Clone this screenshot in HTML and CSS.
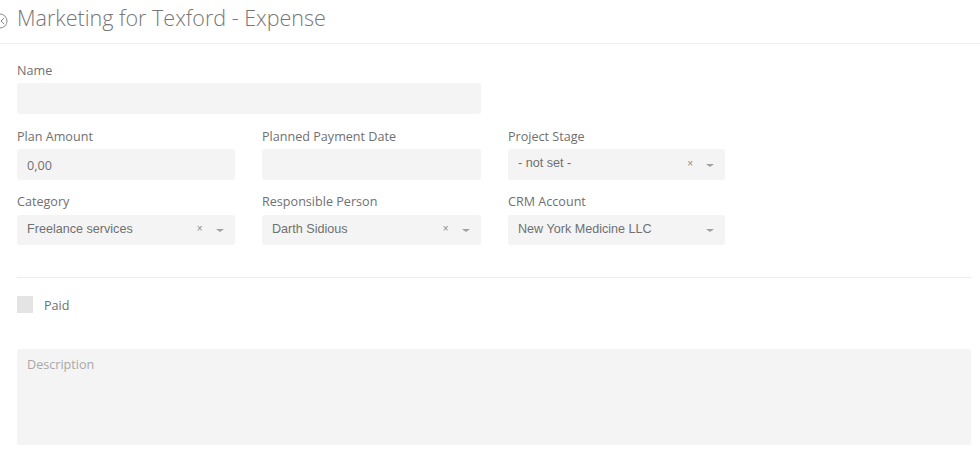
FILE: index.html
```html
<!DOCTYPE html>
<html lang="en">
<head>
<meta charset="utf-8">
<title>Marketing for Texford - Expense</title>
<link rel="stylesheet" href="styles.css">
</head>
<body>
<header class="head">
  <svg class="back" width="9" height="18" viewBox="0 0 9 18"><circle cx="0" cy="9" r="7" fill="none" stroke="#8a8a8a" stroke-width="1"/><path d="M4 6 L1 9 L4 12" fill="none" stroke="#8a8a8a" stroke-width="1"/></svg>
  <h1 class="title">Marketing for Texford - Expense</h1>
</header>
<form class="form">
  <div class="grid">
    <div class="field name"><label class="label">Name</label><div class="control"></div></div>
    <div class="field first"><label class="label">Plan Amount</label><div class="control text">0,00</div></div>
    <div class="field"><label class="label">Planned Payment Date</label><div class="control"></div></div>
    <div class="field"><label class="label">Project Stage</label><div class="control select tall"><span class="value">- not set -</span><span class="x">×</span><span class="caret"></span></div></div>
    <div class="field first"><label class="label low">Category</label><div class="control select"><span class="value">Freelance services</span><span class="x">×</span><span class="caret"></span></div></div>
    <div class="field"><label class="label low">Responsible Person</label><div class="control select"><span class="value">Darth Sidious</span><span class="x">×</span><span class="caret"></span></div></div>
    <div class="field"><label class="label low">CRM Account</label><div class="control select"><span class="value">New York Medicine LLC</span><span class="caret"></span></div></div>
  </div>
  <hr class="rule">
  <div class="paid"><span class="check"></span><span class="paid-label">Paid</span></div>
  <div class="desc">Description</div>
</form>
</body>
</html>
```
FILE: styles.css
```css
html, body { margin: 0; padding: 0; background: #fff; }
body { width: 980px; height: 458px; overflow: hidden; font-family: "Open Sans", sans-serif; color: #707070; }
.head { height: 44px; box-sizing: border-box; border-bottom: 1px solid #eceef3; position: relative; padding: 3px 0 0 17px; }
.back { position: absolute; left: 0; top: 12px; }
.title { margin: 0; font-size: 21.5px; font-weight: 300; line-height: 29px; color: #777; }
.form { padding: 18px 9px 0 17px; }
.grid { display: grid; grid-template-columns: 217.5px 218.5px 217px; column-gap: 27.5px; row-gap: 13px; width: 710px; }
.field { min-width: 0; }
.first { grid-column: 1; }
.name { grid-column: 1 / 3; margin-bottom: 1px; }
.label { display: block; font-size: 12.6px; line-height: 17px; color: #707070; margin-bottom: 4px; }
.label.low { margin-bottom: 5px; }
.control { background: #f4f4f4; border-radius: 3px; height: 31px; box-sizing: border-box; }
.select { height: 30px; display: flex; align-items: center; padding: 0 11px 3px 10px; font-family: "Liberation Sans", sans-serif; font-size: 12.6px; color: #707070; }
.tall { height: 31px; }
.text { padding: 8px 10px 0; font-size: 12.6px; line-height: 17px; color: #707070; }
.value { flex: 1; }
.x { font-size: 10px; color: #8a8a8a; margin-right: 13px; }
.caret { width: 0; height: 0; border-left: 4px solid transparent; border-right: 4px solid transparent; border-top: 3px solid #a0a0a0; margin-top: 4px; }
.rule { border: 0; border-top: 1px solid #ededed; margin: 32px 0 0; }
.paid { display: flex; align-items: center; margin-top: 18px; height: 17px; }
.check { width: 16px; height: 17px; background: #e4e4e4; }
.paid-label { font-size: 12.6px; line-height: 19px; padding-top: 1px; color: #707070; margin-left: 11px; }
.desc { margin-top: 36px; height: 96px; box-sizing: border-box; background: #f4f4f4; border-radius: 2px; padding: 7px 10px; font-size: 12.6px; line-height: 17px; color: #a8a8a8; }
```
